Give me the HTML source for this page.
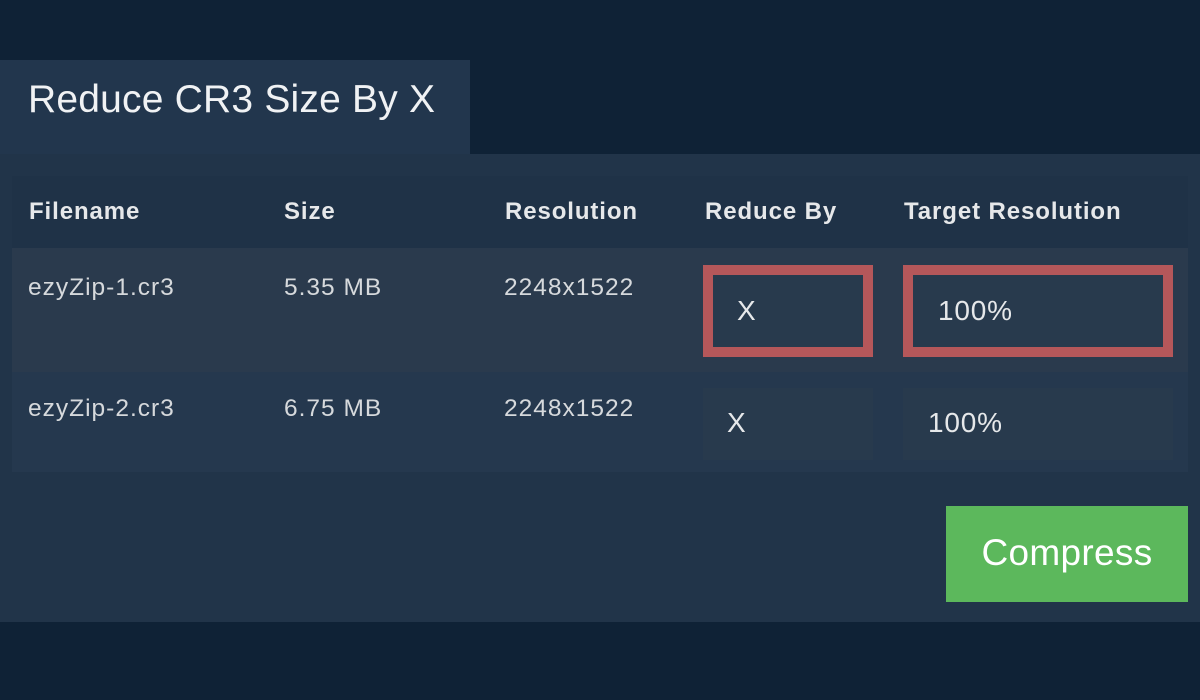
<!DOCTYPE html>
<html><head><style>
*{margin:0;padding:0;box-sizing:border-box}
body{width:1200px;height:700px;background:#0f2236;position:relative;overflow:hidden;font-family:"Liberation Sans",sans-serif;color:#e6e8ea}
div{position:absolute}
.t{white-space:nowrap}
.h{font-weight:bold;font-size:24px;top:198px;letter-spacing:0.9px}
.c{font-size:24.5px;color:#d6d9dc;letter-spacing:1px}
.v{font-size:28px;letter-spacing:0.8px}
</style></head><body>
<div style="left:0;top:60px;width:470px;height:100px;background:#22364d"></div>
<div class="t" style="left:28px;top:78px;font-size:39px;color:#f0f2f4;letter-spacing:0.2px">Reduce CR3 Size By X</div>
<div style="left:0;top:154px;width:1200px;height:468px;background:#213449"></div>
<div style="left:12px;top:176px;width:1176px;height:72px;background:#1f3247"></div>
<div style="left:12px;top:248px;width:1176px;height:124px;background:#2a3a4d"></div>
<div style="left:12px;top:372px;width:1176px;height:100px;background:#25384e"></div>
<div class="t h" style="left:29px">Filename</div>
<div class="t h" style="left:284px">Size</div>
<div class="t h" style="left:505px">Resolution</div>
<div class="t h" style="left:705px">Reduce By</div>
<div class="t h" style="left:904px">Target Resolution</div>
<div class="t c" style="left:28px;top:274px">ezyZip-1.cr3</div>
<div class="t c" style="left:284px;top:274px">5.35 MB</div>
<div class="t c" style="left:504px;top:274px">2248x1522</div>
<div class="t c" style="left:28px;top:395px">ezyZip-2.cr3</div>
<div class="t c" style="left:284px;top:395px">6.75 MB</div>
<div class="t c" style="left:504px;top:395px">2248x1522</div>
<div style="left:703px;top:265px;width:170px;height:92px;border:10px solid #b5575a;background:#283a4d"></div>
<div style="left:903px;top:265px;width:270px;height:92px;border:10px solid #b5575a;background:#283a4d"></div>
<div class="t v" style="left:737px;top:295px">X</div>
<div class="t v" style="left:938px;top:295px">100%</div>
<div style="left:703px;top:388px;width:170px;height:72px;background:#283a4d"></div>
<div style="left:903px;top:388px;width:270px;height:72px;background:#283a4d"></div>
<div class="t v" style="left:727px;top:407px">X</div>
<div class="t v" style="left:928px;top:407px">100%</div>
<div style="left:946px;top:506px;width:242px;height:96px;background:#5cb85c"></div>
<div class="t" style="left:946px;top:532px;width:242px;text-align:center;font-size:37px;color:#fff;letter-spacing:0.3px">Compress</div>
</body></html>
